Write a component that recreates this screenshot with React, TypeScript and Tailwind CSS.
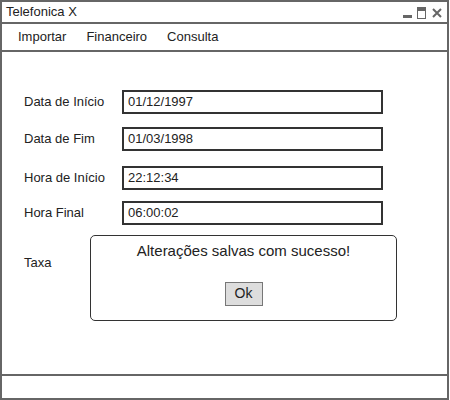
import React from "react";

const font = { fontFamily: '"Liberation Sans", Arial, sans-serif' };

function Field({ label, value, mt }: { label: string; value: string; mt: string }) {
  return (
    <div className={`flex items-center ${mt}`}>
      <div className="w-[120px] shrink-0 whitespace-nowrap pl-[22px] text-[13px] text-[#222]">{label}</div>
      <div className="w-[261px] shrink-0 h-[24px] border-2 border-[#333] flex items-center pl-[4px] text-[13px] text-[#222]">
        {value}
      </div>
    </div>
  );
}

export default function App() {
  return (
    <div style={font} className="w-[449px] h-[400px] border-2 border-[#666] bg-white flex flex-col relative">
      <div className="h-[22px] border-b-2 border-[#666] flex items-center justify-between pl-[4px] pr-[5px]">
        <span className="text-[13px] text-[#222]">Telefonica X</span>
        <div className="flex items-center gap-[5px] mt-[1px]">
          <div className="w-[9px] h-[3px] bg-[#666] mt-[8px]" />
          <div className="w-[9px] h-[12px] border-[1.5px] border-[#666] border-t-[4px]" />
          <svg width="10" height="10" viewBox="0 0 10 10" className="ml-[1px]">
            <path d="M1 1 L9 9 M9 1 L1 9" stroke="#666" strokeWidth="2" />
          </svg>
        </div>
      </div>
      <div className="h-[28px] border-b-2 border-[#666] flex items-center pl-[16px] gap-[20px] text-[13px] text-[#222]">
        <span>Importar</span>
        <span>Financeiro</span>
        <span>Consulta</span>
      </div>
      <div className="flex-1 relative">
        <Field label="Data de Início" value="01/12/1997" mt="mt-[38px]" />
        <Field label="Data de Fim" value="01/03/1998" mt="mt-[13px]" />
        <Field label="Hora de Início" value="22:12:34" mt="mt-[15px]" />
        <Field label="Hora Final" value="06:00:02" mt="mt-[11px]" />
        <div className="pl-[22px] mt-[28px] text-[13px] text-[#222]">Taxa</div>
        <div className="absolute left-[88px] top-[183px] w-[307px] h-[86px] border-[1.5px] border-[#333] rounded-[5px] bg-white flex flex-col items-center">
          <div className="mt-[4px] text-[15px] text-[#222]">Alterações salvas com sucesso!</div>
          <div className="mt-[19px] w-[38px] h-[24px] bg-[#ddd] border border-[#777] flex items-center justify-center text-[14px] text-[#222]">
            Ok
          </div>
        </div>
      </div>
      <div className="h-[24px] border-t-2 border-[#666]" />
    </div>
  );
}
